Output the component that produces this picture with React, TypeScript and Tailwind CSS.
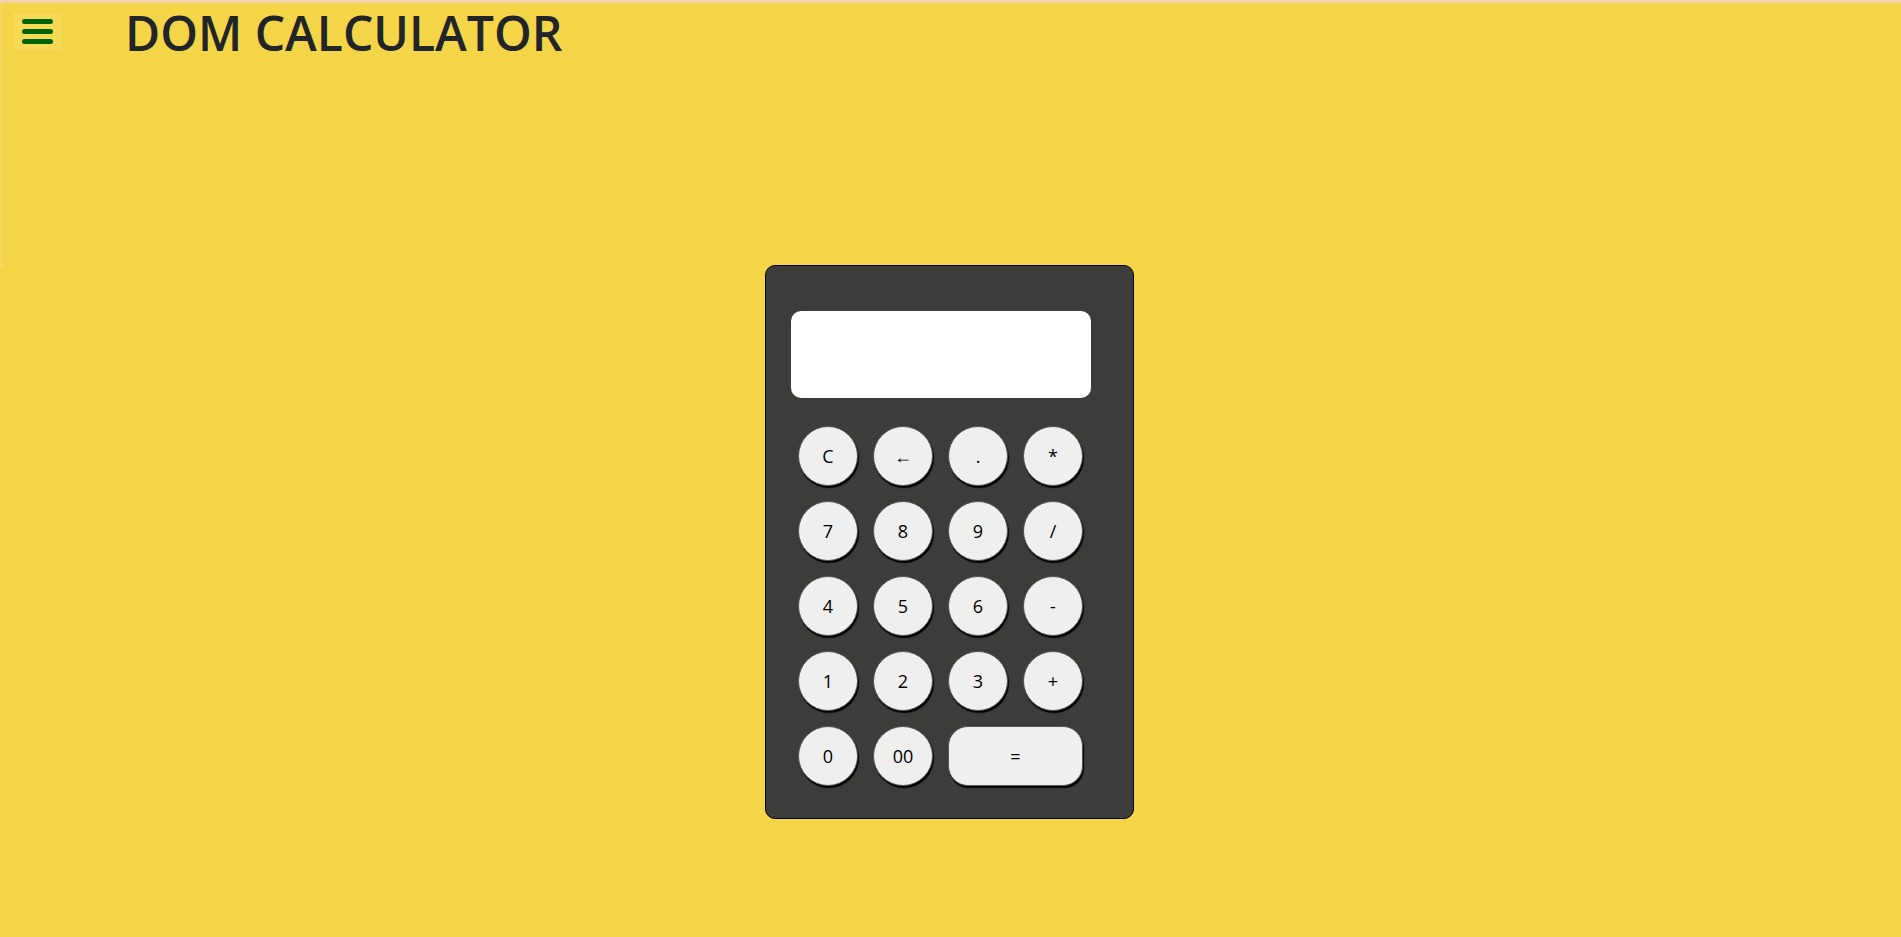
const keys: { label: string; wide?: boolean }[] = [
  { label: "C" },
  { label: "←" },
  { label: "." },
  { label: "*" },
  { label: "7" },
  { label: "8" },
  { label: "9" },
  { label: "/" },
  { label: "4" },
  { label: "5" },
  { label: "6" },
  { label: "-" },
  { label: "1" },
  { label: "2" },
  { label: "3" },
  { label: "+" },
  { label: "0" },
  { label: "00" },
  { label: "=", wide: true },
];

function MenuButton() {
  return (
    <button className="ml-[10px] mt-[10px] flex h-[37px] w-[49px] flex-col items-start justify-center gap-[5px] bg-[#f6d955] pl-[9px]">
      <span className="block h-[5px] w-[31px] rounded-full bg-[#006400]" />
      <span className="block h-[5px] w-[31px] rounded-full bg-[#006400]" />
      <span className="block h-[5px] w-[31px] rounded-full bg-[#006400]" />
    </button>
  );
}

function Key({ label, wide }: { label: string; wide?: boolean }) {
  return (
    <button
      className={
        wide
          ? "col-span-2 flex h-[60px] items-center justify-center rounded-[20px] border border-[#555] bg-[#efefef] text-[18px] text-black shadow-[1px_2px_1px_#000]"
          : "flex h-[60px] w-[60px] items-center justify-center rounded-full border border-[#555] bg-[#efefef] text-[18px] text-black shadow-[1px_2px_1px_#000]"
      }
    >
      {label}
    </button>
  );
}

export default function App() {
  return (
    <div className="min-h-screen border-t-[3px] border-[#f4d2ae] bg-[#f5d548] font-['Open_Sans','Noto_Sans',sans-serif]">
      <div className="flex">
        <div className="h-[264px] w-[3px] bg-[#f3d85c]" />
        <div className="flex-1">
          <header className="flex items-start">
            <MenuButton />
            <h1 className="ml-[63px] text-[48px] leading-[60px] font-semibold text-[#212529]">
              DOM CALCULATOR
            </h1>
          </header>
          <div className="mt-[202px] flex justify-center pr-[5px]">
            <div className="h-[554px] w-[369px] rounded-[10px] border border-black bg-[#3c3c3b] pl-[25px] pt-[45px]">
              <div className="h-[87px] w-[300px] rounded-[10px] bg-white" />
              <div className="ml-[7px] mt-[28px] grid grid-cols-[repeat(4,60px)] gap-[15px]">
                {keys.map((k) => (
                  <Key key={k.label} label={k.label} wide={k.wide} />
                ))}
              </div>
            </div>
          </div>
        </div>
      </div>
    </div>
  );
}
